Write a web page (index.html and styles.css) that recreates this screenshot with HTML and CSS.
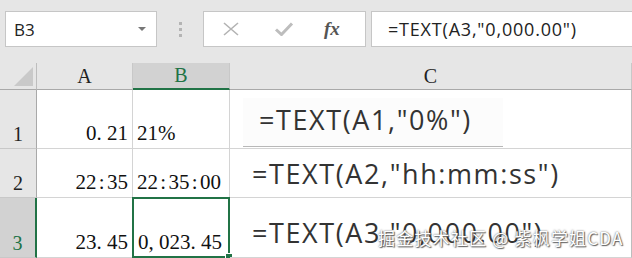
FILE: index.html
```html
<html>
<head>
    <meta charset="UTF-8">
    <title>TEXT function</title>
    <link rel="stylesheet" href="styles.css">
</head>
<body>

<div class="toolbar">
    <div class="namebox">
        <span>B3</span>
        <span class="caret"></span>
    </div>
    <div class="grip"><i></i><i></i><i></i></div>
    <div class="fxbox">
        <svg class="ico" width="20" height="14" viewBox="0 0 20 14">
            <path d="M3 1 L17 13 M17 1 L3 13" stroke="#b3b3b3" stroke-width="1.6" fill="none"/>
        </svg>
        <svg class="ico" width="20" height="14" viewBox="0 0 20 14">
            <path d="M2 7.5 L7.5 12.5 L18 1.5" stroke="#bdbdbd" stroke-width="3" fill="none"/>
        </svg>
        <span class="fx">fx</span>
    </div>
    <div class="formula">=TEXT(A3,"0,000.00")</div>
</div>

<div class="sheet">
    <div class="corner"><span class="tri"></span></div>
    <div class="colhead">A</div>
    <div class="colhead active">B</div>
    <div class="colhead">C</div>

    <div class="rowhead">1</div>
    <div class="cell num">0<span class="pt">.</span>21</div>
    <div class="cell">21%</div>
    <div class="cell wide">
        <div class="shot first">=TEXT(A1,"0%")</div>
    </div>

    <div class="rowhead">2</div>
    <div class="cell num">22<span class="col">:</span>35</div>
    <div class="cell">22<span class="col">:</span>35<span class="col">:</span>00</div>
    <div class="cell wide">
        <div class="shot">=TEXT(A2,"hh:mm:ss")</div>
    </div>

    <div class="rowhead active">3</div>
    <div class="cell num">23<span class="pt">.</span>45</div>
    <div class="cell selected">0<span class="pt">,</span>023<span class="pt">.</span>45<span class="handle"></span></div>
    <div class="cell wide">
        <div class="shot last">=TEXT(A3,"0,000.00")</div>
    </div>
</div>

<div class="watermark">掘金技术社区 @ 紫枫学姐CDA</div>

</body>
</html>
```

FILE: styles.css
```css
body {
    margin: 0;
    width: 632px;
    height: 258px;
    overflow: hidden;
    background: #fff;
    font-family: 'Open Sans', 'Noto Sans', sans-serif;
    position: relative;
}

.toolbar {
    height: 63px;
    box-sizing: border-box;
    background-color: #e6e6e6;
    display: flex;
    align-items: flex-start;
    padding: 11px 0 0 5px;
}

.namebox {
    width: 152px;
    height: 36px;
    box-sizing: border-box;
    background-color: #fff;
    border: 1px solid #c6c6c6;
    display: flex;
    align-items: center;
    justify-content: space-between;
    padding: 0 10px 0 8px;
    font-size: 17px;
    color: #222;
}

.caret {
    width: 0;
    height: 0;
    border-left: 4px solid transparent;
    border-right: 4px solid transparent;
    border-top: 4px solid #777;
}

.grip {
    width: 46px;
    height: 36px;
    display: flex;
    flex-direction: column;
    align-items: center;
    justify-content: center;
    gap: 3px;
}

.grip i {
    display: block;
    width: 3px;
    height: 3px;
    background-color: #b4b4b4;
}

.fxbox {
    width: 163px;
    height: 36px;
    box-sizing: border-box;
    background-color: #fff;
    border: 1px solid #c6c6c6;
    display: flex;
    align-items: center;
    padding-left: 17px;
    gap: 33px;
}

.fx {
    font-family: 'Liberation Serif', serif;
    font-style: italic;
    font-weight: bold;
    font-size: 19px;
    color: #555;
    margin-left: -3px;
}

.formula {
    flex: 1;
    height: 36px;
    box-sizing: border-box;
    margin-left: 5px;
    background-color: #fff;
    border: 1px solid #c6c6c6;
    border-right: none;
    display: flex;
    align-items: center;
    padding-left: 16px;
    font-size: 18px;
    letter-spacing: 0.8px;
    color: #222;
}

.sheet {
    display: grid;
    grid-template-columns: 37px 96px 97px 1fr;
    grid-template-rows: 27px 59px 49px 60px;
    font-family: 'Liberation Serif', serif;
    font-size: 21px;
    color: #111;
}

.corner {
    background-color: #e6e6e6;
    border-right: 1px solid #bdbdbd;
    border-bottom: 1px solid #a9a9a9;
    position: relative;
}

.tri {
    position: absolute;
    right: 3px;
    bottom: 3px;
    width: 0;
    height: 0;
    border-left: 19px solid transparent;
    border-bottom: 19px solid #c9c9c9;
}

.colhead {
    background-color: #e6e6e6;
    border-right: 1px solid #c8c8c8;
    border-bottom: 1px solid #a9a9a9;
    display: flex;
    align-items: flex-end;
    justify-content: center;
    padding-bottom: 1px;
    font-size: 20px;
    color: #222;
}

.colhead.active {
    background-color: #d2d2d2;
    border-bottom: 2px solid #217346;
    color: #217346;
}

.rowhead {
    background-color: #e6e6e6;
    border-right: 1px solid #a9a9a9;
    border-bottom: 1px solid #c8c8c8;
    display: flex;
    align-items: flex-end;
    justify-content: center;
    padding-bottom: 2px;
    font-size: 20px;
    color: #222;
}

.rowhead.active {
    background-color: #d2d2d2;
    border-right: 2px solid #217346;
    color: #217346;
}

.cell {
    border-right: 1px solid #d4d4d4;
    border-bottom: 1px solid #d4d4d4;
    display: flex;
    align-items: flex-end;
    padding: 0 0 2px 4px;
    position: relative;
}

.cell.num {
    justify-content: flex-end;
    padding: 0 4px 2px 0;
}

.pt {
    display: inline-block;
    width: 0.5em;
}

.col {
    display: inline-block;
    width: 0.5em;
    text-align: center;
}

.cell.selected {
    border: 2px solid #217346;
    margin: -1px 0 0 -1px;
    padding-bottom: 1px;
}

.handle {
    position: absolute;
    right: -5px;
    bottom: -5px;
    width: 6px;
    height: 6px;
    background-color: #217346;
    border: 1px solid #fff;
}

.cell.wide {
    align-items: center;
    padding: 0;
    border-right: 1px solid #bdbdbd;
    font-family: 'Open Sans', 'Noto Sans', sans-serif;
    font-size: 27px;
    letter-spacing: 1.6px;
    color: #333;
}

.shot {
    padding-left: 22px;
}

.shot.first {
    margin: 6px 0 0 13px;
    padding: 3px 0 8px 16px;
    width: 244px;
    background-color: #fcfcfc;
    border-bottom: 1px solid #b8b8b8;
}

.shot.last {
    margin-top: 9px;
}

.watermark {
    position: absolute;
    left: 378px;
    top: 225px;
    font-family: 'Noto Sans CJK SC', sans-serif;
    font-size: 17px;
    color: #fff;
    letter-spacing: 1.2px;
    text-shadow: 0 0 2px #555, 1px 1px 1px #666;
}
```
